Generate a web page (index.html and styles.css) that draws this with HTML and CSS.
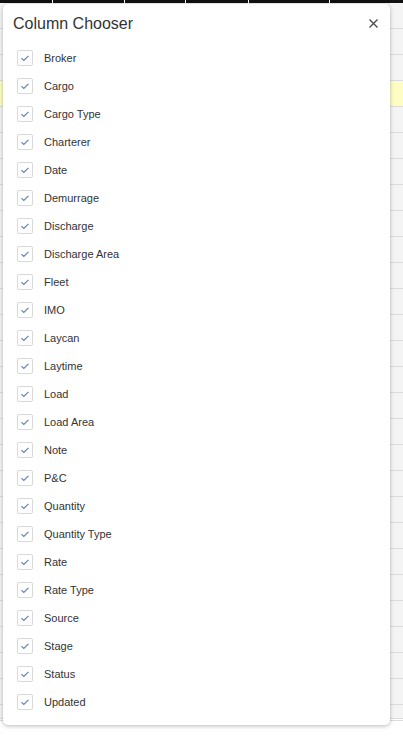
FILE: index.html
```html
<!DOCTYPE html>
<html>
<head>
<meta charset="utf-8">
<link rel="stylesheet" href="styles.css">
</head>
<body>
<div class="grid">
  <div class="grid-head">
    <span class="col" style="width:53px"></span>
    <span class="col" style="width:72px"></span>
    <span class="col" style="width:61px"></span>
    <span class="col" style="width:63px"></span>
    <span class="col" style="width:81px"></span>
  </div>
  <div class="grid-body">
    <div class="row"></div>
    <div class="row"></div>
    <div class="row"></div>
    <div class="row hl"></div><div class="row"></div><div class="row"></div><div class="row"></div>
    <div class="row"></div><div class="row"></div><div class="row"></div><div class="row"></div>
    <div class="row"></div><div class="row"></div><div class="row"></div><div class="row"></div>
    <div class="row"></div><div class="row"></div><div class="row"></div><div class="row"></div>
    <div class="row"></div><div class="row"></div><div class="row"></div><div class="row"></div>
    <div class="row"></div><div class="row"></div><div class="row"></div><div class="row"></div>
    <div class="grid-foot"></div>
    <div class="grid-end"></div>
  </div>
</div>

<div class="dialog">
  <div class="dialog-header">
    <h2 class="dialog-title">Column Chooser</h2>
    <button class="close" aria-label="Close">
      <svg width="9" height="9" viewBox="0 0 9 9"><path d="M0.5 0.5L8.5 8.5M8.5 0.5L0.5 8.5" stroke="#4a4a4a" stroke-width="1.3" fill="none"/></svg>
    </button>
  </div>
  <ul class="list">
    <li class="item"><span class="cb"><svg width="14" height="14" viewBox="0 0 14 14"><path d="M3.5 7.2L5.8 9.5L10.5 4.8" stroke="#6482b5" stroke-width="1.2" fill="none"/></svg></span><span class="lbl">Broker</span></li>
    <li class="item"><span class="cb"><svg width="14" height="14" viewBox="0 0 14 14"><path d="M3.5 7.2L5.8 9.5L10.5 4.8" stroke="#6482b5" stroke-width="1.2" fill="none"/></svg></span><span class="lbl">Cargo</span></li>
    <li class="item"><span class="cb"><svg width="14" height="14" viewBox="0 0 14 14"><path d="M3.5 7.2L5.8 9.5L10.5 4.8" stroke="#6482b5" stroke-width="1.2" fill="none"/></svg></span><span class="lbl">Cargo Type</span></li>
    <li class="item"><span class="cb"><svg width="14" height="14" viewBox="0 0 14 14"><path d="M3.5 7.2L5.8 9.5L10.5 4.8" stroke="#6482b5" stroke-width="1.2" fill="none"/></svg></span><span class="lbl">Charterer</span></li>
    <li class="item"><span class="cb"><svg width="14" height="14" viewBox="0 0 14 14"><path d="M3.5 7.2L5.8 9.5L10.5 4.8" stroke="#6482b5" stroke-width="1.2" fill="none"/></svg></span><span class="lbl">Date</span></li>
    <li class="item"><span class="cb"><svg width="14" height="14" viewBox="0 0 14 14"><path d="M3.5 7.2L5.8 9.5L10.5 4.8" stroke="#6482b5" stroke-width="1.2" fill="none"/></svg></span><span class="lbl">Demurrage</span></li>
    <li class="item"><span class="cb"><svg width="14" height="14" viewBox="0 0 14 14"><path d="M3.5 7.2L5.8 9.5L10.5 4.8" stroke="#6482b5" stroke-width="1.2" fill="none"/></svg></span><span class="lbl">Discharge</span></li>
    <li class="item"><span class="cb"><svg width="14" height="14" viewBox="0 0 14 14"><path d="M3.5 7.2L5.8 9.5L10.5 4.8" stroke="#6482b5" stroke-width="1.2" fill="none"/></svg></span><span class="lbl">Discharge Area</span></li>
    <li class="item"><span class="cb"><svg width="14" height="14" viewBox="0 0 14 14"><path d="M3.5 7.2L5.8 9.5L10.5 4.8" stroke="#6482b5" stroke-width="1.2" fill="none"/></svg></span><span class="lbl">Fleet</span></li>
    <li class="item"><span class="cb"><svg width="14" height="14" viewBox="0 0 14 14"><path d="M3.5 7.2L5.8 9.5L10.5 4.8" stroke="#6482b5" stroke-width="1.2" fill="none"/></svg></span><span class="lbl">IMO</span></li>
    <li class="item"><span class="cb"><svg width="14" height="14" viewBox="0 0 14 14"><path d="M3.5 7.2L5.8 9.5L10.5 4.8" stroke="#6482b5" stroke-width="1.2" fill="none"/></svg></span><span class="lbl">Laycan</span></li>
    <li class="item"><span class="cb"><svg width="14" height="14" viewBox="0 0 14 14"><path d="M3.5 7.2L5.8 9.5L10.5 4.8" stroke="#6482b5" stroke-width="1.2" fill="none"/></svg></span><span class="lbl">Laytime</span></li>
    <li class="item"><span class="cb"><svg width="14" height="14" viewBox="0 0 14 14"><path d="M3.5 7.2L5.8 9.5L10.5 4.8" stroke="#6482b5" stroke-width="1.2" fill="none"/></svg></span><span class="lbl">Load</span></li>
    <li class="item"><span class="cb"><svg width="14" height="14" viewBox="0 0 14 14"><path d="M3.5 7.2L5.8 9.5L10.5 4.8" stroke="#6482b5" stroke-width="1.2" fill="none"/></svg></span><span class="lbl">Load Area</span></li>
    <li class="item"><span class="cb"><svg width="14" height="14" viewBox="0 0 14 14"><path d="M3.5 7.2L5.8 9.5L10.5 4.8" stroke="#6482b5" stroke-width="1.2" fill="none"/></svg></span><span class="lbl">Note</span></li>
    <li class="item"><span class="cb"><svg width="14" height="14" viewBox="0 0 14 14"><path d="M3.5 7.2L5.8 9.5L10.5 4.8" stroke="#6482b5" stroke-width="1.2" fill="none"/></svg></span><span class="lbl">P&amp;C</span></li>
    <li class="item"><span class="cb"><svg width="14" height="14" viewBox="0 0 14 14"><path d="M3.5 7.2L5.8 9.5L10.5 4.8" stroke="#6482b5" stroke-width="1.2" fill="none"/></svg></span><span class="lbl">Quantity</span></li>
    <li class="item"><span class="cb"><svg width="14" height="14" viewBox="0 0 14 14"><path d="M3.5 7.2L5.8 9.5L10.5 4.8" stroke="#6482b5" stroke-width="1.2" fill="none"/></svg></span><span class="lbl">Quantity Type</span></li>
    <li class="item"><span class="cb"><svg width="14" height="14" viewBox="0 0 14 14"><path d="M3.5 7.2L5.8 9.5L10.5 4.8" stroke="#6482b5" stroke-width="1.2" fill="none"/></svg></span><span class="lbl">Rate</span></li>
    <li class="item"><span class="cb"><svg width="14" height="14" viewBox="0 0 14 14"><path d="M3.5 7.2L5.8 9.5L10.5 4.8" stroke="#6482b5" stroke-width="1.2" fill="none"/></svg></span><span class="lbl">Rate Type</span></li>
    <li class="item"><span class="cb"><svg width="14" height="14" viewBox="0 0 14 14"><path d="M3.5 7.2L5.8 9.5L10.5 4.8" stroke="#6482b5" stroke-width="1.2" fill="none"/></svg></span><span class="lbl">Source</span></li>
    <li class="item"><span class="cb"><svg width="14" height="14" viewBox="0 0 14 14"><path d="M3.5 7.2L5.8 9.5L10.5 4.8" stroke="#6482b5" stroke-width="1.2" fill="none"/></svg></span><span class="lbl">Stage</span></li>
    <li class="item"><span class="cb"><svg width="14" height="14" viewBox="0 0 14 14"><path d="M3.5 7.2L5.8 9.5L10.5 4.8" stroke="#6482b5" stroke-width="1.2" fill="none"/></svg></span><span class="lbl">Status</span></li>
    <li class="item"><span class="cb"><svg width="14" height="14" viewBox="0 0 14 14"><path d="M3.5 7.2L5.8 9.5L10.5 4.8" stroke="#6482b5" stroke-width="1.2" fill="none"/></svg></span><span class="lbl">Updated</span></li>
  </ul>
</div>
</body>
</html>
```
FILE: styles.css
```css
html, body {
  margin: 0;
  padding: 0;
  background: #ffffff;
  font-family: "Liberation Sans", Arial, sans-serif;
}

.grid {
  width: 403px;
}

.grid-head {
  display: flex;
  height: 3px;
  background: #111111;
}

.grid-head .col {
  display: block;
  height: 3px;
  border-right: 1px solid #ffffff;
  box-sizing: border-box;
  flex: none;
}

.grid-body {
  background: #f4f4f4;
}

.row {
  height: 25px;
  border-bottom: 1px solid #dcdcdc;
}

.row.hl {
  background: #fdfdc4;
}

.grid-foot {
  height: 13px;
  border-bottom: 1px solid #dcdcdc;
}

.grid-end {
  height: 1px;
  background: #ffffff;
  border-bottom: 1px solid #dcdcdc;
}

.dialog {
  position: absolute;
  left: 3px;
  top: 4px;
  width: 387px;
  height: 721px;
  background: #ffffff;
  border-radius: 5px;
  box-shadow: 0 1px 4px rgba(0, 0, 0, 0.28);
  box-sizing: border-box;
}

.dialog-header {
  display: flex;
  align-items: center;
  justify-content: space-between;
  height: 40px;
  padding: 0 10px 0 10px;
  box-sizing: border-box;
}

.dialog-title {
  margin: 0;
  font-weight: normal;
  font-size: 16px;
  color: #333333;
  line-height: 38px;
}

.close {
  border: 0;
  background: none;
  padding: 0;
  width: 14px;
  height: 14px;
  display: flex;
  align-items: center;
  justify-content: center;
  margin-top: -2px;
}

.list {
  list-style: none;
  margin: 0;
  padding: 0 0 0 14px;
}

.item {
  display: flex;
  align-items: center;
  height: 28px;
}

.cb {
  width: 16px;
  height: 16px;
  box-sizing: border-box;
  border: 1px solid #d9d9d9;
  border-radius: 2px;
  display: flex;
  align-items: center;
  justify-content: center;
  flex: none;
}

.lbl {
  margin-left: 11px;
  font-size: 11px;
  color: #333333;
}
```
